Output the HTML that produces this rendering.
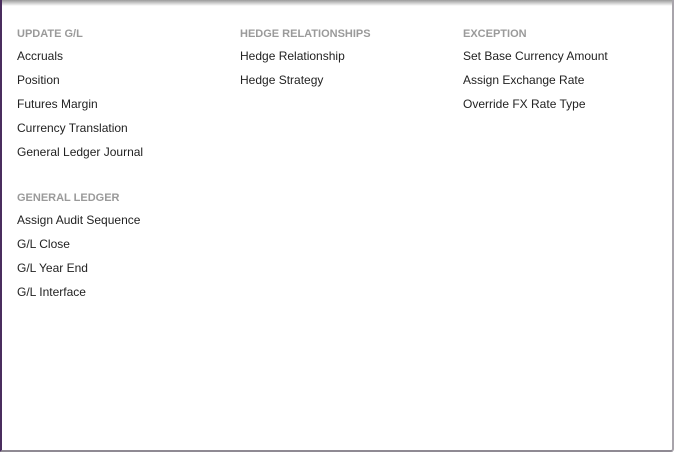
<!DOCTYPE html>
<html><head><style>
html,body{margin:0;padding:0;}
body{width:674px;height:452px;overflow:hidden;background:#fff;font-family:"Liberation Sans",Arial,sans-serif;position:relative;}
.frame{position:absolute;left:0;top:0;height:450px;border-left:2px solid #4a2d5e;border-right:2px solid #a8a4ab;border-bottom:2px solid #8f8a93;border-bottom-right-radius:3px;box-sizing:content-box;width:670px;}
.shadow{position:absolute;left:2px;right:2px;top:0;height:6px;background:linear-gradient(#9a9a9a,#fff);}
.col{position:absolute;top:28px;}
h4{margin:0;font-size:11px;font-weight:bold;color:#9a9a9a;height:12px;line-height:12px;}
.it{font-size:12px;color:#222;height:24px;line-height:24px;}
.first{margin-top:4px;}
</style></head><body>
<div class="frame"></div>
<div class="shadow"></div>
<div class="col" style="left:17px">
<h4>UPDATE G/L</h4>
<div class="first"></div>
<div class="it">Accruals</div>
<div class="it">Position</div>
<div class="it">Futures Margin</div>
<div class="it">Currency Translation</div>
<div class="it">General Ledger Journal</div>
<h4 style="margin-top:28px">GENERAL LEDGER</h4>
<div class="first"></div>
<div class="it">Assign Audit Sequence</div>
<div class="it">G/L Close</div>
<div class="it">G/L Year End</div>
<div class="it">G/L Interface</div>
</div>
<div class="col" style="left:240px">
<h4>HEDGE RELATIONSHIPS</h4>
<div class="first"></div>
<div class="it">Hedge Relationship</div>
<div class="it">Hedge Strategy</div>
</div>
<div class="col" style="left:463px">
<h4>EXCEPTION</h4>
<div class="first"></div>
<div class="it">Set Base Currency Amount</div>
<div class="it">Assign Exchange Rate</div>
<div class="it">Override FX Rate Type</div>
</div>
</body></html>
